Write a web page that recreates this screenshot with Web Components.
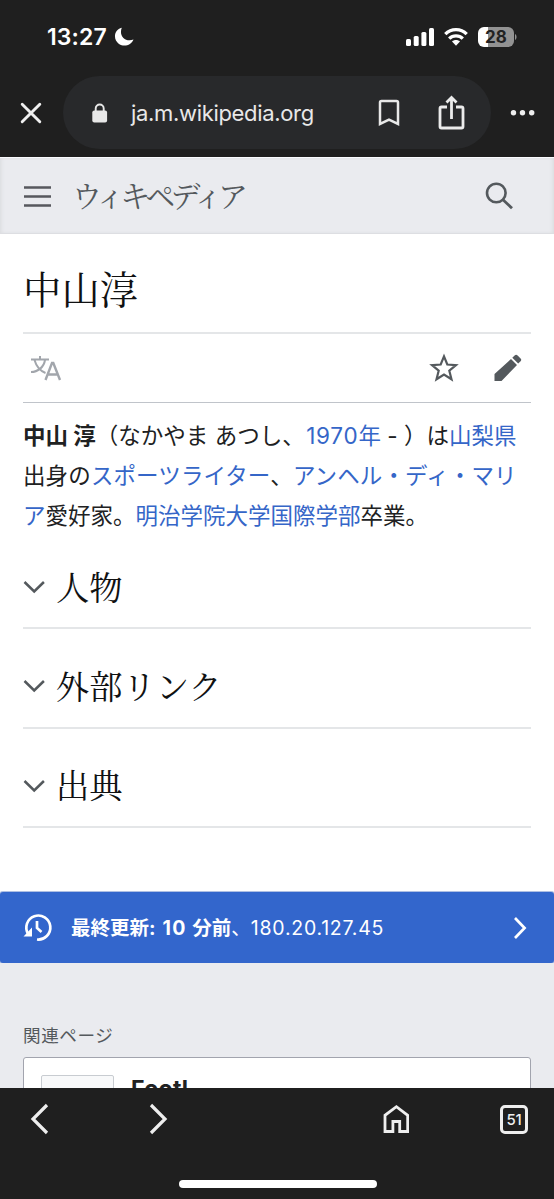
<!DOCTYPE html>
<html lang="ja">
<head>
<meta charset="utf-8">
<meta name="viewport" content="width=device-width">
<title>中山淳 - Wikipedia</title>
<style>
html,body{margin:0;height:100%;overflow:hidden;background:#fff}
body{font-family:Inter,"Noto Sans CJK JP",sans-serif;color:#202122}
</style>
</head>
<body>
<mobile-browser></mobile-browser>
<script>
const define = (name, html) => {
  const t = document.createElement('template');
  t.innerHTML = '<style>*{box-sizing:border-box}svg{display:block;flex:none;fill:none}</style>' + html;
  customElements.define(name, class extends HTMLElement {
    constructor() {
      super();
      this.attachShadow({mode: 'open'}).append(t.content.cloneNode(true));
    }
  });
};

define('status-bar', `<style>
:host{display:flex;height:76px;padding:0 37px 2px 47px;align-items:center;color:#fff;box-sizing:border-box}
.time{font-size:23px;font-weight:600;line-height:28px;letter-spacing:.1px;width:67px;white-space:nowrap}
.right{margin-left:auto;display:flex;align-items:center}
.battery{width:36px;height:20px;border-radius:6px;background:linear-gradient(90deg,#fff 10px,#929292 10px);color:#222;font-size:17px;line-height:20px;font-weight:700;text-align:center;margin-left:10px}
</style>
<span class="time">13:27</span>
<svg width="21" height="20" viewBox="0 0 21 20"><path d="M7.800.8C-.5 3-1 13 5 17c5.500 3.600 12.500.8 14.500-4.500C11.500 15.500 4.500 9 7.800.8Z" fill="#fff"/></svg>
<div class="right">
<svg width="28" height="18" viewBox="0 0 28 18"><g fill="#fff"><rect y="11" width="5" height="7" rx="1.5"/><rect x="7.700" y="8" width="5" height="10" rx="1.5"/><rect x="15.400" y="4" width="5" height="14" rx="1.5"/><rect x="23" width="5" height="18" rx="1.5"/></g></svg>
<svg style="margin-left:10px" width="24" height="18" viewBox="0 0 24 18"><path d="M1.300 6.200a15 15 0 0 1 21.400 0M5.200 10.600a9.700 9.700 0 0 1 13.600 0" stroke="#fff" stroke-width="3.300"/><path d="m8 13.600 4 4.100 4-4.100c-2.100-2-5.900-2-8 0Z" fill="#fff"/></svg>
<div class="battery">28</div>
<svg width="3" height="8"><path d="M1 1c2 1 2 5 0 6Z" fill="#929292"/></svg>
</div>`);

define('address-bar', `<style>
:host{display:flex;height:81px;padding-left:20px;color:#e8e8e8}
.close{margin-top:26px}
.pill{display:flex;align-items:center;width:428px;height:73px;margin-left:21px;border-radius:37px;background:#28292b;padding-left:29px}
.url{font-size:22px;line-height:30px;margin-left:23px;width:247px;white-space:nowrap;letter-spacing:-.33px}
</style>
<svg class="close" width="22" height="22" viewBox="0 0 22 22"><path d="m2.200 2.200 17.600 17.600m0-17.600L2.200 19.800" stroke="#f0f0f0" stroke-width="2.900" stroke-linecap="round"/></svg>
<div class="pill">
<svg width="16" height="20" viewBox="0 0 16 20"><rect x=".3" y="7.500" width="14.800" height="12" rx="2" fill="#e8e8e8"/><path d="M3.700 8V5.500a4 4 0 0 1 8 0V8" stroke="#e8e8e8" stroke-width="1.900"/></svg>
<span class="url">ja.m.wikipedia.org</span>
<svg width="22" height="28" viewBox="0 0 22 28"><path d="M2 3.500Q2 2 3.500 2h15Q20 2 20 3.500V25l-9-4.300L2 25Z" stroke="#e8e8e8" stroke-width="2.500"/></svg>
<svg style="margin-left:37px" width="28" height="36" viewBox="0 0 28 36"><path d="M10 12H4.500Q3 12 3 13.500v18Q3 33 4.500 33h20q1.500 0 1.500-1.500v-18Q26 12 24.500 12H19M14.500 24V3M9.500 7.500l5-5 5 5" stroke="#ebebeb" stroke-width="2.800"/></svg>
</div>
<svg style="margin:33px 0 0 19px" width="26" height="8"><g fill="#eee"><circle cx="3.500" cy="3.700" r="2.700"/><circle cx="12.500" cy="3.700" r="2.700"/><circle cx="21.700" cy="3.700" r="2.700"/></g></svg>`);

define('wiki-header', `<style>
:host{display:flex;align-items:center;height:77px;background:#eaebef;border-top:1px solid #fafafd;border-bottom:1px solid #dddee2;padding:0 40px 0 24px;box-sizing:border-box;box-shadow:inset 3px 0 4px -2px #d9dadd,inset -3px 0 4px -2px #d9dadd}
.name{font:400 30px/40px "Noto Serif CJK JP","Noto Sans CJK JP",serif;letter-spacing:-4.950px;color:#54595d;margin:-4px 0 0 20px;white-space:nowrap}
</style>
<svg width="28" height="24"><path d="M0 3.500h27M0 12.500h27M0 21.500h27" stroke="#57585e" stroke-width="2.700"/></svg>
<span class="name">ウィキペディア</span>
<svg style="margin-left:auto" width="29" height="29" viewBox="0 0 29 29"><circle cx="11.300" cy="12" r="9.300" stroke="#54595d" stroke-width="2.600"/><path d="m18 18.800 9 8.500" stroke="#54595d" stroke-width="2.800"/></svg>`);

define('article-title', `<style>
:host{display:flex;align-items:center;height:100px;margin:0 23px;border-bottom:2px solid #e4e6e8;padding-top:10px;box-sizing:border-box}
h1{margin:0;font:400 38.400px/56px "Noto Serif CJK JP","Noto Sans CJK JP",serif;color:#101112}
</style><h1><slot></slot></h1>`);

define('article-tools', `<style>
:host{display:flex;align-items:center;height:69px;margin:0 23px;border-bottom:1px solid #c0c4ca;padding:0 9px 0 7px;box-sizing:border-box}
</style>
<svg width="32" height="28" viewBox="0 0 32 28"><g stroke="#a2a6ac" stroke-width="2"><path d="M1 5.500h18M10 2v3.500M4.500 6c2 7 6 11 11 13M15 6c-1 7-7 12-14 12"/><path d="M15.500 26 22 9h1.300L30 26M18 20.500h9.500" stroke-width="2.400"/></g></svg>
<svg style="margin-left:auto" width="30" height="30" viewBox="0 0 30 30"><path d="m15 3.400 3.300 8.100 8.700.6-6.700 5.600 2.200 8.600-7.500-4.700-7.500 4.700 2.200-8.600L3 12.100l8.700-.6Z" stroke="#54595d" stroke-width="2.200"/></svg>
<svg style="margin-left:35px" width="28" height="30" viewBox="0 0 28 30"><path d="M.5 28v-7L17 6l6 6L7.500 28ZM18.300 4.700l2.300-2.300q1.500-1.400 3 0l3 3q1.300 1.400 0 2.800l-2.400 2.300Z" fill="#54595d"/></svg>`);

define('wiki-link', `<style>:host{display:inline;color:#3566c8}</style><slot></slot>`);

define('article-lead', `<style>
:host{display:block;height:134px;padding:13px 23px 0;box-sizing:border-box;font-size:22.500px;line-height:40px;white-space:nowrap}
p{margin:0}p span{display:block;height:40px}
.n{letter-spacing:.75px;font-style:normal;margin-left:1.500px}
.b{letter-spacing:.12px}
</style>
<p><span><b>中山 淳</b>（なかやま あつし、<wiki-link><i class="n">1970</i>年</wiki-link> - ）は<wiki-link>山梨県</wiki-link></span>
<span class="b">出身の<wiki-link>スポーツライター</wiki-link>、<wiki-link>アンヘル・ディ・マリ</wiki-link></span>
<span>
<wiki-link>ア</wiki-link>愛好家。<wiki-link>明治学院大学国際学部</wiki-link>卒業。</span></p>`);
customElements.get('article-lead');

define('wiki-section', `<style>
:host{display:flex;align-items:center;height:99.500px;margin:0 23px;border-bottom:2px solid #e4e6e8;padding-top:17px;box-sizing:border-box}
h2{margin:-3px 0 0 11px;font:400 33.300px/50px "Noto Serif CJK JP","Noto Sans CJK JP",serif;color:#101112}
</style>
<svg width="22" height="14" viewBox="0 0 22 14"><path d="m1.500 2 9.700 9.500L20.900 2" stroke="#54595d" stroke-width="2.500"/></svg>
<h2><slot></slot></h2>`);

define('last-modified', `<style>
:host{display:flex;align-items:center;height:71px;margin-top:64px;background:#3366cc;color:#fff;border-radius:3px;padding:0 27px 0 23px;box-sizing:border-box;font-size:19.500px;line-height:28px;white-space:nowrap;box-shadow:0 0 0 1px #aebfe3}
.t{margin-left:18px}b{font-weight:700}
.n{letter-spacing:1.200px}.ip{letter-spacing:.75px}
</style>
<svg style="margin:-2px 0 0 -1px" width="31" height="30" viewBox="0 0 31 30"><path d="M6.200 22A12 12 0 1 1 15 27.500" stroke="#fff" stroke-width="2.700"/><path d="M1.500 24.500h8.500v-9Z" fill="#fff"/><path d="M15 9v7l4.500 4" stroke="#fff" stroke-width="2.700"/></svg>
<span class="t"><b>最終更新<span class="n">: 10 </span>分前</b>、<span class="ip">180.20.127.45</span></span>
<svg style="margin-left:auto" width="14" height="24" viewBox="0 0 14 24"><path d="m2 2 9.600 10L2 22" stroke="#fff" stroke-width="2.700"/></svg>`);

define('related-pages', `<style>
:host{display:block;height:125px;background:#eaebef;padding:57px 23px 0;box-sizing:border-box;overflow:hidden}
.h{font-size:17.600px;line-height:32px;color:#54595d;letter-spacing:.55px}
.card{height:70px;margin-top:5px;border:1px solid #a2a4ae;border-radius:3px;background:#fff;padding:17px;display:flex}
.thumb{width:73px;height:60px;border:1px solid #c8ccd1;border-radius:2px;background:#f8f9fa}
.name{font-size:23px;font-weight:700;line-height:28px;margin:0 0 0 17px;color:#202122;letter-spacing:.3px}
</style>
<div class="h">関連ページ</div>
<div class="card"><div class="thumb"></div><div class="name">Footl</div></div>`);

define('browser-toolbar', `<style>
:host{display:block;height:111px;background:#1f1f1f;padding-top:14px;box-sizing:border-box}
.row{display:flex;height:34px;align-items:center;padding:0 26px 0 30px}
.tabs{width:28px;height:29px;border:3px solid #eee;border-radius:5px;color:#eee;font-size:15px;font-weight:500;line-height:23px;text-align:center;margin-left:91px;letter-spacing:-.3px}
.home{width:198px;height:8px;border-radius:4px;background:#fff;margin:44px 0 0 179px}
</style>
<div class="row">
<svg width="20" height="32" viewBox="0 0 20 32"><path d="M17 2 3 16l14 14" stroke="#eee" stroke-width="3.200"/></svg>
<svg style="margin-left:98px" width="20" height="32" viewBox="0 0 20 32"><path d="m3 2 14 14L3 30" stroke="#eee" stroke-width="3.200"/></svg>
<svg style="margin-left:auto" width="26" height="30" viewBox="0 0 26 30"><path d="M2 27.500V11.300L13.400 2.700l11.300 8.600v16.200h-8v-10h-6.800v10Z" stroke="#eee" stroke-width="2.800"/></svg>
<div class="tabs">51</div>
</div><div class="home"></div>`);

define('mobile-browser', `<style>
:host{display:flex;flex-direction:column;width:554px;height:1199px;background:#fff}
.top{background:#1f1f1f;flex:none}
main{height:931px;flex:none;overflow:hidden}
wiki-section:first-of-type{height:92px;padding-top:10px}
</style>
<div class="top"><status-bar></status-bar><address-bar></address-bar></div>
<main>
<wiki-header></wiki-header>
<article-title>中山淳</article-title>
<article-tools></article-tools>
<article-lead></article-lead>
<wiki-section>人物</wiki-section>
<wiki-section>外部リンク</wiki-section>
<wiki-section>出典</wiki-section>
<last-modified></last-modified>
<related-pages></related-pages>
</main>
<browser-toolbar></browser-toolbar>`);
</script>
</body>
</html>
